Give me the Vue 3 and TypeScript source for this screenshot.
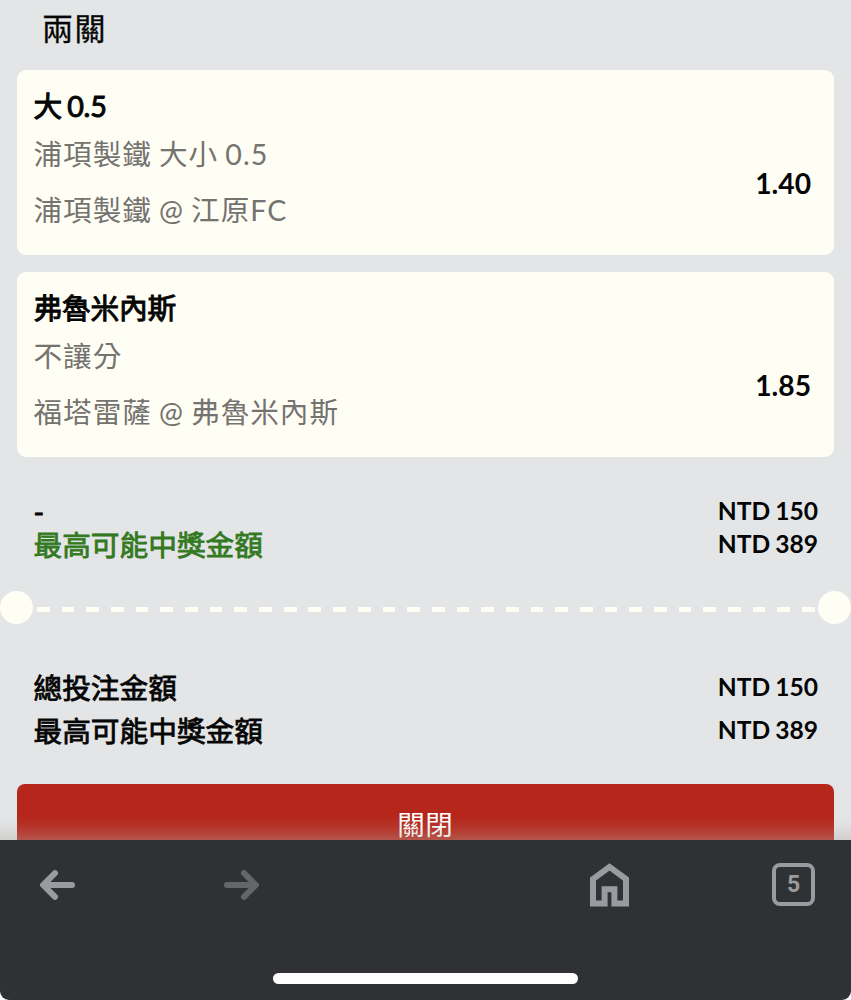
<template>
  <div class="screen">
    <main class="slip">
      <h1 class="slip-title">兩關</h1>

      <section v-for="bet in bets" :key="bet.pick" class="bet-card">
        <h2 class="bet-pick">{{ bet.pick }}</h2>
        <div class="bet-body">
          <div class="bet-info">
            <p>{{ bet.market }}</p>
            <p>{{ bet.match }}</p>
          </div>
          <span class="bet-odds">{{ bet.odds }}</span>
        </div>
      </section>

      <dl class="summary">
        <div class="row">
          <dt>-</dt>
          <dd>{{ formatAmount(stake) }}</dd>
        </div>
        <div class="row payout">
          <dt>最高可能中獎金額</dt>
          <dd>{{ formatAmount(maxPayout) }}</dd>
        </div>
      </dl>

      <div class="divider">
        <span class="notch"></span>
        <span class="dashes"></span>
        <span class="notch"></span>
      </div>

      <dl class="summary totals">
        <div class="row">
          <dt>總投注金額</dt>
          <dd>{{ formatAmount(stake) }}</dd>
        </div>
        <div class="row">
          <dt>最高可能中獎金額</dt>
          <dd>{{ formatAmount(maxPayout) }}</dd>
        </div>
      </dl>

      <button class="close-btn" type="button">關閉</button>
    </main>

    <nav class="toolbar">
      <div class="toolbar-icons">
        <button class="tool back" type="button" aria-label="Back">
          <svg width="36" height="30" viewBox="0 0 36 30">
            <path d="M15 3.2 3.3 15 15 26.8M4 15h28" />
          </svg>
        </button>
        <button class="tool forward" type="button" aria-label="Forward" disabled>
          <svg width="36" height="30" viewBox="0 0 36 30">
            <path d="M21 3.2 32.7 15 21 26.8M32 15H4" />
          </svg>
        </button>
        <button class="tool home" type="button" aria-label="Home">
          <svg width="39" height="44" viewBox="0 0 39 44">
            <path d="M3 40.5V16L19.5 3.9 36 16v24.5H24.4V26.2h-9.8v14.3z" />
          </svg>
        </button>
        <button class="tool tabs" type="button" aria-label="Tabs">{{ tabCount }}</button>
      </div>
      <span class="home-indicator"></span>
    </nav>
  </div>
</template>

<script setup lang="ts">
interface Bet {
  pick: string;
  market: string;
  match: string;
  odds: string;
}

const bets: Bet[] = [
  { pick: '大 0.5', market: '浦項製鐵 大小 0.5', match: '浦項製鐵 @ 江原FC', odds: '1.40' },
  { pick: '弗魯米內斯', market: '不讓分', match: '福塔雷薩 @ 弗魯米內斯', odds: '1.85' },
];

const stake = 150;
const maxPayout = 389;
const tabCount = 5;

function formatAmount(value: number): string {
  return `NTD ${value}`;
}
</script>

<style>
body {
  margin: 0;
  background: #fff;
}
</style>

<style scoped>
.screen {
  display: flex;
  flex-direction: column;
  height: 1000px;
  overflow: hidden;
  border-radius: 0 0 9px 9px;
  background: #303134;
  color: #050505;
  font-family: Lato, 'Noto Sans CJK TC', sans-serif;
}
h1,
h2,
p,
dl,
dd {
  margin: 0;
}
button {
  border: none;
  padding: 0;
  font-family: inherit;
}
.slip {
  position: relative;
  flex: none;
  height: 839.5px;
  overflow: hidden;
  background: #e4e5e7;
}
/* content fades out just above the toolbar */
.slip::after {
  content: '';
  position: absolute;
  left: 0;
  right: 0;
  bottom: 0;
  height: 24px;
  background: linear-gradient(rgba(176, 178, 170, 0), rgba(176, 170, 160, 0.1) 45%, rgba(176, 170, 160, 0.36));
}
.slip-title {
  padding-left: 42px;
  height: 69.5px;
  line-height: 57px;
  font-size: 31px;
  font-weight: 400;
  letter-spacing: 1.5px;
  -webkit-text-stroke: 0.3px currentColor;
}
.bet-card {
  box-sizing: border-box;
  height: 185px;
  margin: 0 17px 17px 16.5px;
  padding: 16px 23px 0 17px;
  border-radius: 9px;
  background: #fffef5;
}
.bet-pick {
  line-height: 40px;
  font-size: 28.7px;
  font-weight: 400;
  letter-spacing: -0.2px;
  word-spacing: -2px;
  -webkit-text-stroke: 1px currentColor;
}
.bet-body {
  display: flex;
  align-items: center;
  justify-content: space-between;
}
.bet-info {
  line-height: 56px;
  font-size: 28.6px;
  letter-spacing: 1px;
  word-spacing: -1.2px;
  color: #74736f;
}
.bet-odds {
  padding-top: 2px;
  font-size: 28.2px;
  font-weight: 700;
}
.summary {
  padding: 22px 33px 0 33.5px;
}
.row {
  display: flex;
  justify-content: space-between;
  line-height: 33px;
}
.row dt {
  font-size: 28.7px;
  font-weight: 400;
  -webkit-text-stroke: 0.8px currentColor;
}
.row dd {
  margin-top: -1.5px;
  font-size: 24.6px;
  font-weight: 700;
  word-spacing: -1px;
}
.payout dt {
  color: #33791f;
}
.divider {
  display: flex;
  align-items: center;
  justify-content: space-between;
  margin-top: 29px;
}
.notch {
  width: 33px;
  height: 33px;
  border-radius: 50%;
  background: #fffef5;
}
.dashes {
  width: 778px;
  height: 5px;
  margin-top: 4px;
  background: repeating-linear-gradient(90deg, #fffef5 0 12.7px, transparent 12.7px 24.68px);
}
.totals {
  padding-top: 43px;
}
.totals .row {
  line-height: 43px;
}
.close-btn {
  display: block;
  width: 817.5px;
  height: 78px;
  margin: 31px 17px 0 16.5px;
  border-radius: 8px;
  background: #b6261b;
  color: #fff;
  font-size: 27.5px;
  font-weight: 400;
  letter-spacing: 0.5px;
}
.toolbar {
  display: flex;
  flex: 1;
  flex-direction: column;
  align-items: center;
  justify-content: space-between;
  padding-bottom: 16px;
}
.toolbar-icons {
  display: flex;
  align-items: center;
  align-self: stretch;
  height: 90px;
  padding: 0 36px 0 40px;
}
.tool {
  display: flex;
  align-items: center;
  justify-content: center;
  background: none;
  color: #9a9ba0;
}
.tool svg {
  fill: none;
  stroke: currentColor;
  stroke-width: 6;
  stroke-linecap: round;
}
.forward {
  margin-left: 147px;
  color: #65666a;
}
.home {
  margin-left: 331px;
}
.home svg {
  stroke-linecap: butt;
}
.tabs {
  box-sizing: border-box;
  width: 43px;
  height: 43px;
  margin-left: auto;
  border: 4.5px solid #9a9ba0;
  border-radius: 8px;
  font-family: Roboto, sans-serif;
  font-size: 23px;
  font-weight: 700;
}
.home-indicator {
  width: 305px;
  height: 11px;
  border-radius: 6px;
  background: #fff;
}
</style>
